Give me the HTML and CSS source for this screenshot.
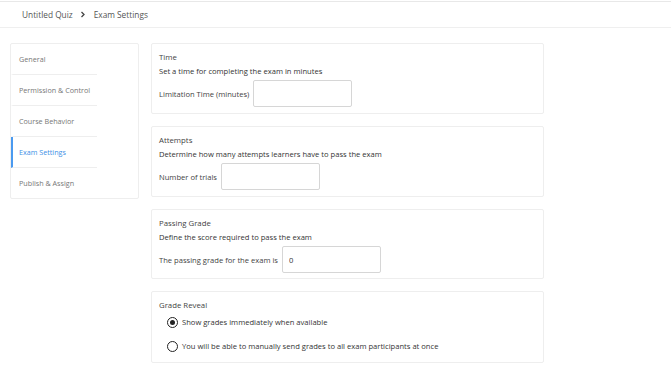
FILE: index.html
```html
<!DOCTYPE html>
<html lang="en">
<head>
  <meta charset="UTF-8" />
  <title>Exam Settings</title>
  <link rel="stylesheet" href="styles.css">
</head>
<body>
  <div class="topbar">
    <span class="crumb">Untitled Quiz</span>
    <svg class="chev" width="6" height="7" viewBox="0 0 6 7"><path d="M1.5 1 L4 3.5 L1.5 6" fill="none" stroke="#444" stroke-width="1.3"/></svg>
    <span class="crumb">Exam Settings</span>
  </div>

  <div class="page">
    <ul class="side-nav">
      <li>General</li>
      <li>Permission &amp; Control</li>
      <li>Course Behavior</li>
      <li class="active">Exam Settings</li>
      <li>Publish &amp; Assign</li>
    </ul>

    <div class="settings">
      <div class="card">
        <div class="card-title">Time</div>
        <div class="card-desc">Set a time for completing the exam in minutes</div>
        <div class="field">
          <label>Limitation Time (minutes)</label>
          <input type="text">
        </div>
      </div>

      <div class="card">
        <div class="card-title">Attempts</div>
        <div class="card-desc">Determine how many attempts learners have to pass the exam</div>
        <div class="field">
          <label>Number of trials</label>
          <input type="text">
        </div>
      </div>

      <div class="card short">
        <div class="card-title">Passing Grade</div>
        <div class="card-desc">Define the score required to pass the exam</div>
        <div class="field">
          <label>The passing grade for the exam is</label>
          <input type="text" value="0">
        </div>
      </div>

      <div class="card tall">
        <div class="card-title">Grade Reveal</div>
        <div class="radio-row"><span class="radio checked"></span>Show grades immediately when available</div>
        <div class="radio-row second"><span class="radio"></span>You will be able to manually send grades to all exam participants at once</div>
      </div>
    </div>
  </div>
</body>
</html>
```

FILE: styles.css
```css
body {
  margin: 0;
  font-family: "Open Sans", "Liberation Sans", sans-serif;
  font-size: 7.6px;
  color: #333;
  background: #fff;
}
.topbar {
  margin-top: 1px;
  height: 25px;
  border-top: 1px solid #e8e8e8;
  border-bottom: 1px solid #efefef;
  display: flex;
  align-items: center;
  padding-left: 22px;
  gap: 6px;
}
.crumb {
  font-size: 8.3px;
  color: #555;
}
.chev {
  margin: 0 2px 0 1px;
}
.page {
  display: flex;
  align-items: flex-start;
  padding: 15px 0 0 10px;
  gap: 12px;
}
.side-nav {
  list-style: none;
  margin: 0;
  padding: 0;
  width: 127px;
  border: 1px solid #eee;
  border-radius: 2px;
}
.side-nav li {
  width: 78px;
  height: 30px;
  line-height: 30px;
  padding-left: 6px;
  border-bottom: 1px solid #eee;
  color: #777;
  font-size: 7.2px;
  border-left: 2px solid transparent;
}
.side-nav li:last-child {
  border-bottom: none;
}
.side-nav li.active {
  color: #3d8fe6;
  border-left-color: #4a9af0;
}
.settings {
  width: 393px;
  display: flex;
  flex-direction: column;
  gap: 12px;
}
.card {
  box-sizing: border-box;
  height: 71px;
  border: 1px solid #eee;
  border-radius: 2px;
  padding: 6px 7px;
}
.card.short {
  height: 70px;
}
.card.tall {
  height: 72px;
}
.card-title {
  line-height: 14px;
  color: #444;
  font-size: 7.8px;
}
.card-desc {
  line-height: 14px;
  color: #333;
}
.field {
  display: flex;
  align-items: center;
  gap: 4px;
  margin-top: 2px;
}
.field label {
  color: #444;
}
.field input {
  height: 25px;
  box-sizing: content-box;
  padding: 0 6px;
  width: 85px;
  border: 1px solid #d6d6d6;
  border-radius: 2px;
  font-family: inherit;
  font-size: 7.6px;
  color: #333;
  outline: none;
}
.radio-row {
  display: flex;
  align-items: center;
  height: 20px;
  padding-left: 8px;
  gap: 4px;
  color: #333;
}
.radio-row.second {
  margin-top: 4px;
}
.radio {
  width: 9px;
  height: 9px;
  border: 1.5px solid #222;
  border-radius: 50%;
  display: flex;
  align-items: center;
  justify-content: center;
}
.radio.checked::after {
  content: "";
  width: 5px;
  height: 5px;
  border-radius: 50%;
  background: #222;
}
```
